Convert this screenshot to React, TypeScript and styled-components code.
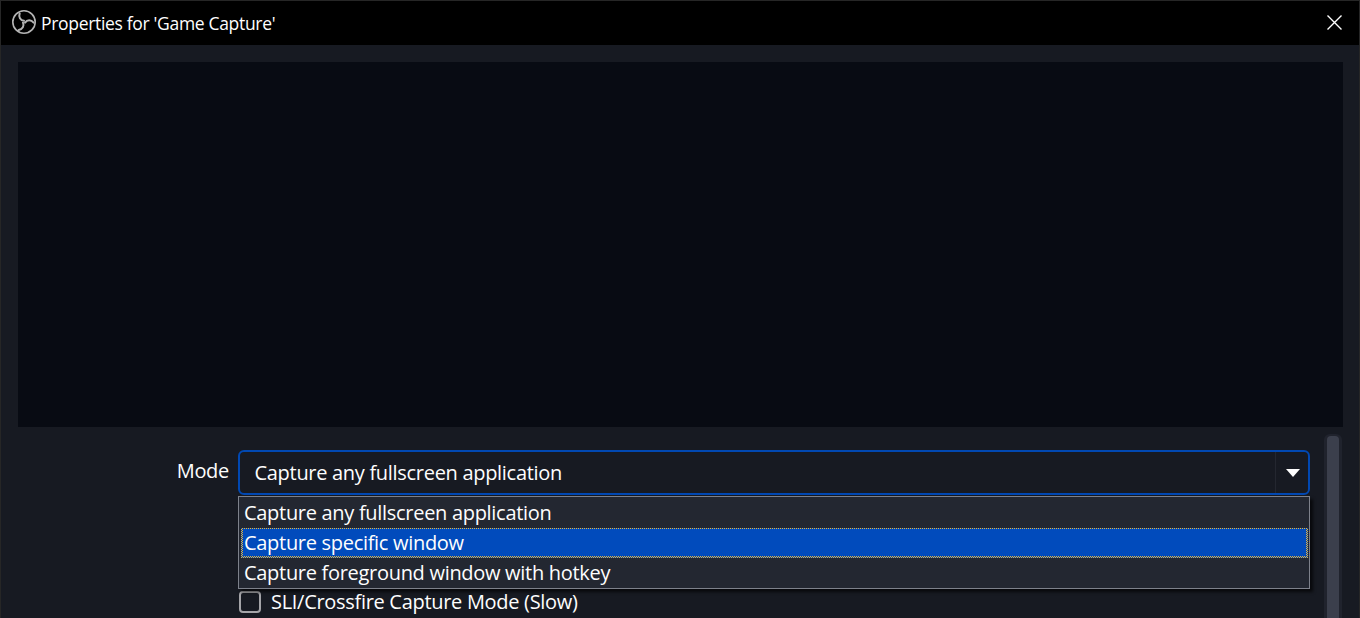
import React from "react";

import styled, {createGlobalStyle} from "styled-components";

const GlobalStyle = createGlobalStyle`
  * {
    box-sizing: border-box;
  }

  body {
    margin: 0;
    background: #171a22;
    overflow: hidden;
  }
`;

const Window = styled.div`
  width: 1360px;
  height: 618px;
  display: flex;
  flex-direction: column;
  overflow: hidden;
  border: 1px solid #262626;
  border-bottom: none;
  background: #171a22;
  color: #fefefe;
  font-family: "Open Sans", "Noto Sans", sans-serif;
  font-size: 20px;
  letter-spacing: -0.3px;
`;

const TitleBar = styled.header`
  height: 44px;
  flex: none;
  display: flex;
  align-items: center;
  padding: 0 17px 2px 10px;
  background: #000;
`;

const Title = styled.h1`
  flex: 1;
  margin: 2px 0 0 4px;
  font-size: 17.5px;
  font-weight: 400;
  line-height: 24px;
  letter-spacing: -0.32px;
  white-space: nowrap;
`;

const CloseButton = styled.button`
  display: flex;
  margin-top: 1px;
  padding: 0;
  border: none;
  background: none;
  color: #fff;
`;

const Preview = styled.div`
  height: 365px;
  flex: none;
  margin: 17px 16px 0 17px;
  background: #080b13;
`;

const Content = styled.div`
  flex: 1;
  display: flex;
  padding: 7px 17px 0 17px;
`;

const Form = styled.div`
  flex: 1;
  display: grid;
  grid-template-columns: 211px 1072px;
  column-gap: 9px;
  align-content: start;
  padding-top: 16px;
`;

const Label = styled.label`
  text-align: right;
  line-height: 41px;
  white-space: nowrap;
`;

const ComboBox = styled.div`
  position: relative;
  height: 45px;
  display: flex;
  border: 2px solid #0148b2;
  border-radius: 6px;
`;

const ComboValue = styled.div`
  flex: 1;
  padding-left: 14.5px;
  line-height: 41px;
`;

const ComboArrow = styled.div`
  width: 33px;
  display: flex;
  align-items: center;
  justify-content: center;
  padding: 1px 0 0 1px;
  border-left: 1px solid #242730;
`;

const Popup = styled.ul`
  position: absolute;
  top: 44px;
  left: -2px;
  width: 1072px;
  height: 93px;
  margin: 0;
  padding: 1px 1px 0 2px;
  list-style: none;
  border: 1px solid #7d818b;
  background: #232731;
  box-shadow: 3px 3px 3px rgba(0, 0, 0, 0.65);
`;

const dots = "repeating-conic-gradient(#e8b43a 0 25%, #0148b2 0 50%)";

const Option = styled.li<{$active?: boolean}>`
  height: 30px;
  padding-left: 3px;
  line-height: 29px;
  white-space: nowrap;

  ${props => props.$active && `
    background:
      linear-gradient(#014bbc, #014bbc) 2px 1px / calc(100% - 4px) calc(100% - 3px) no-repeat,
      ${dots} 0 0 / 2px 2px;
  `}
`;

const CheckRow = styled.div`
  grid-column: 2;
  display: flex;
  align-items: center;
  gap: 10px;
  margin-top: 93px;
  padding-left: 1px;
  line-height: 28px;
`;

const CheckBox = styled.span`
  width: 22px;
  height: 22px;
  margin-bottom: 1px;
  border: 2px solid #a4a4a8;
  border-radius: 4px;
`;

const ScrollBar = styled.div`
  width: 18px;
  flex: none;
  padding: 2px 3px 0;
  border-radius: 6px 6px 0 0;
  background: #20232d;
`;

const ScrollHandle = styled.div`
  height: 100%;
  border-radius: 4px 4px 0 0;
  background: #3b3f4c;
`;

const blade = "M8.7 4.4C7.4 8 9.2 11.5 13 11.8";

const ObsLogo = () => (
    <svg width="26" height="26" viewBox="0 0 26 26" fill="none" stroke="#b4b4b4">
        <circle cx="13" cy="13" r="11.2" strokeWidth="1.6"/>
        <g strokeWidth="2" strokeLinecap="round">
            <path d={blade}/>
            <path d={blade} transform="rotate(120 13 13)"/>
            <path d={blade} transform="rotate(240 13 13)"/>
        </g>
    </svg>
);

const options = [
    "Capture any fullscreen application",
    "Capture specific window",
    "Capture foreground window with hotkey",
];

const App: React.FC = () => {
    return (
        <>
            <GlobalStyle/>
            <Window>
                <TitleBar>
                    <ObsLogo/>
                    <Title>Properties for 'Game Capture'</Title>
                    <CloseButton aria-label="Close">
                        <svg width="15" height="15" viewBox="0 0 15 15" stroke="currentColor" strokeWidth="1.4">
                            <path d="M.5.5l14 14M14.5.5l-14 14"/>
                        </svg>
                    </CloseButton>
                </TitleBar>
                <Preview/>
                <Content>
                    <Form>
                        <Label>Mode</Label>
                        <ComboBox>
                            <ComboValue>{options[0]}</ComboValue>
                            <ComboArrow>
                                <svg width="14" height="8" viewBox="0 0 14 8" fill="#fefefe">
                                    <path d="M0 0h14L7 8z"/>
                                </svg>
                            </ComboArrow>
                            <Popup>
                                {options.map((option, i) => (
                                    <Option key={option} $active={i === 1}>{option}</Option>
                                ))}
                            </Popup>
                        </ComboBox>
                        <CheckRow>
                            <CheckBox/>
                            SLI/Crossfire Capture Mode (Slow)
                        </CheckRow>
                    </Form>
                    <ScrollBar>
                        <ScrollHandle/>
                    </ScrollBar>
                </Content>
            </Window>
        </>
    );
};

export default App;
